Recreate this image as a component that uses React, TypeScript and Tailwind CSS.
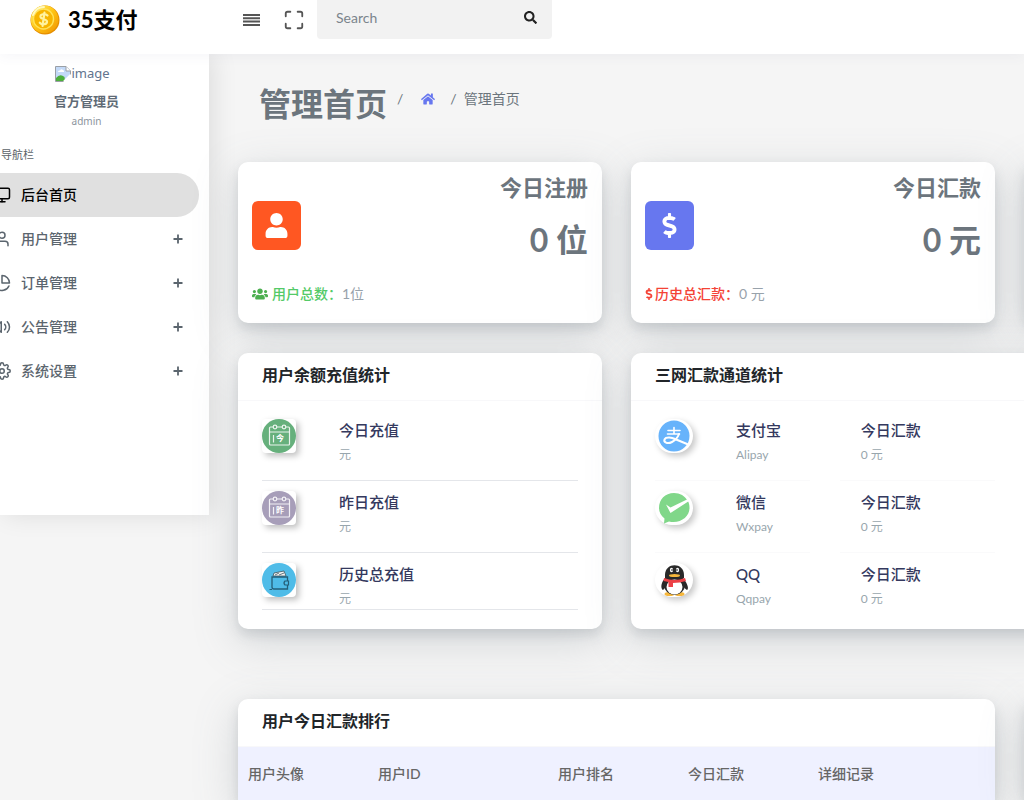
import { useState, type ReactNode } from "react"
import { FiMonitor, FiUser, FiPieChart, FiVolume2, FiSettings, FiMaximize } from "react-icons/fi"
import { FaUser, FaDollarSign, FaUsers, FaHome, FaSearch } from "react-icons/fa"

const menu = [
  { label: "后台首页", icon: FiMonitor, sub: false },
  { label: "用户管理", icon: FiUser, sub: true },
  { label: "订单管理", icon: FiPieChart, sub: true },
  { label: "公告管理", icon: FiVolume2, sub: true },
  { label: "系统设置", icon: FiSettings, sub: true },
]

const cardClass =
  "rounded-[10px] bg-white shadow-[0_12px_44px_rgba(110,125,130,0.25),0_6px_12px_rgba(100,110,120,0.2)]"

function CoinLogo() {
  return (
    <svg viewBox="0 0 30 30" className="size-[30px]" aria-hidden="true">
      <defs>
        <linearGradient id="coin" x1="0" y1="0" x2="1" y2="1">
          <stop offset="0" stopColor="#fff06a" />
          <stop offset="0.5" stopColor="#ffc414" />
          <stop offset="1" stopColor="#ef9300" />
        </linearGradient>
      </defs>
      <circle cx="15" cy="15" r="14.5" fill="#e58e00" />
      <circle cx="14.6" cy="14.4" r="13.8" fill="url(#coin)" />
      <circle cx="13.5" cy="14" r="10" fill="#f7b500" stroke="#ffe25a" strokeWidth="1.4" />
      <path d="M3 10Q6 2 14 2" stroke="#fff9c0" strokeWidth="2" fill="none" strokeLinecap="round" />
      <path d="M17.5 10.5C15.500 8.200 10 9 10.500 12C11 14.500 16.500 13.500 17 16.500C17.200 19.500 12 20.300 9.800 17.700M14.500 7.500L12.500 21" stroke="#fff3a0" strokeWidth="2.200" fill="none" strokeLinecap="round" />
    </svg>
  )
}

function BrokenImage() {
  return (
    <svg viewBox="0 0 16 16" className="size-4" aria-hidden="true">
      <path d="M.5 .5H11L15.500 5V10L10 15.500H.5Z" fill="#c3d9f7" stroke="#9a9fa5" />
      <path d="M11 .5V5H15.500" fill="#fff" stroke="#9a9fa5" />
      <path d="M3 6Q3 4 5 4.500Q6 2.500 8 4Q9.500 4.500 9 6Z" fill="#fff" />
      <path d="M1 15V12Q5 7 9.500 11L10 15Z" fill="#4caf3c" />
      <path d="M9 16L16 9" stroke="#fff" strokeWidth="2.500" />
    </svg>
  )
}

function CalendarIcon({ char, color }: { char: string; color: string }) {
  return (
    <svg viewBox="0 0 34 34" className="size-[34px]">
      <circle cx="17" cy="17" r="17" fill={color} />
      <g fill="none" stroke="#fff" strokeOpacity="0.85" strokeWidth="1.200">
        <rect x="7.500" y="8" width="20" height="18" rx="1" />
        <path d="M7.500 13H27.500M11.500 16V23.500" />
        <circle cx="13" cy="8" r="1.800" fill={color} />
        <circle cx="22" cy="8" r="1.800" fill={color} />
      </g>
      <text x="18" y="22" textAnchor="middle" fontSize="8" fontWeight="700" fill="#fff">{char}</text>
    </svg>
  )
}

function WalletIcon() {
  return (
    <svg viewBox="0 0 34 34" className="size-[34px]" aria-hidden="true">
      <circle cx="17" cy="17" r="17" fill="#4fbce8" />
      <path d="M11 13L12 10L22 8L24 13Z" fill="#f3f3f3" stroke="#3c5660" strokeWidth="0.800" />
      <path d="M13 12L17 10M17 12L22 10" stroke="#3c5660" strokeWidth="0.800" />
      <path d="M10 14H25.500V26H12Q10 26 10 24Z" fill="none" stroke="#255f78" strokeWidth="1.300" />
      <path d="M26.500 18H23Q21 20 23 22H26.500Z" fill="#4fbce8" stroke="#255f78" strokeWidth="1.200" />
      <path d="M7.500 26.500H10" stroke="#255f78" />
    </svg>
  )
}

function AlipayIcon() {
  return (
    <svg viewBox="0 0 38 34" className="h-[34px] w-[38px]" aria-hidden="true">
      <circle cx="19" cy="17" r="15.500" fill="#67b3fb" />
      <g fill="none" stroke="#fff" strokeLinecap="round">
        <path d="M13 11.500H25M19 8.500V14.500M12.500 15H24.500" strokeWidth="1.600" />
        <path d="M24 15Q22 20.500 17 23C12 25.500 8.500 23 9.500 20.500C11 17.500 17 18.500 20 20L32 25" strokeWidth="2" />
      </g>
    </svg>
  )
}

function WxpayIcon() {
  return (
    <svg viewBox="0 0 38 34" className="h-[34px] w-[38px]" aria-hidden="true">
      <path d="M19 2C10 2 4 8.500 4 17C4 21 6 25 9.500 27.500L9 32.500L14 30.500C25 33 34.500 26 34.500 17C34.500 14 34 11.500 32.500 9.500C30 5 25 2 19 2Z" fill="#80d789" />
      <path d="M11 13.500L15.500 16.500L34 7.500V10L15.500 22Z" fill="#fff" />
    </svg>
  )
}

function QqIcon() {
  return (
    <svg viewBox="0 0 38 34" className="h-[34px] w-[38px]" aria-hidden="true">
      <ellipse cx="14.500" cy="31" rx="5" ry="2" fill="#f6b73c" />
      <ellipse cx="24.500" cy="31" rx="5" ry="2" fill="#f6b73c" />
      <path d="M10 15C5 21 6 26 8 27C11 25 13 19 12 15ZM28 15C33 21 34 26 32 27C28 25 26 19 27 15Z" fill="#292929" />
      <ellipse cx="19.500" cy="22" rx="10.500" ry="10" fill="#292929" />
      <ellipse cx="19.500" cy="24" rx="8" ry="7.500" fill="#fff" />
      <path d="M10 15V12C10 -1 29 -1 29 12V15Z" fill="#292929" />
      <ellipse cx="16.500" cy="7" rx="1.600" ry="2.200" fill="#fff" />
      <ellipse cx="22.500" cy="7" rx="1.600" ry="2.200" fill="#fff" />
      <circle cx="17" cy="7" r="0.800" />
      <circle cx="22" cy="7" r="0.800" />
      <ellipse cx="19.500" cy="12.500" rx="5.500" ry="1.500" fill="#f6b73c" />
      <path d="M9 15Q19.500 19 30 15L31 18Q25 20 18 20V24H13.500V19L8.500 18Z" fill="#ec4146" />
    </svg>
  )
}

function Sidebar() {
  const [active, setActive] = useState("后台首页")

  return (
    <aside className="flex h-[461px] w-[209px] shrink-0 justify-end overflow-hidden bg-white">
      <div className="w-[245px] shrink-0">
        <div className="pt-2 pr-2 text-center">
          <div className="flex h-6 items-center justify-center text-[13px] text-slate-500">
            <BrokenImage />
            <span className="font-['Noto_Sans']">image</span>
          </div>
        </div>
        <div className="text-center">
          <p className="mt-[3px] text-[13px] leading-6 font-bold text-[#5f6b76]">官方管理员</p>
          <p className="font-['Noto_Sans'] text-[10px] leading-4 text-[#8b949d]">admin</p>
        </div>

        <p className="mt-4 pl-[37px] text-[11px] leading-5 text-[#5b6268]">导航栏</p>

        {/* Navigation */}
        <nav className="mt-2 pr-[10px]">
          {menu.map(({ label, icon: Icon, sub }) => (
            <a
              key={label}
              href="#"
              onClick={() => setActive(label)}
              className={`flex h-11 items-center rounded-r-full pr-4 pl-[29px] text-sm font-medium ${
                active === label ? "bg-[#e0e0e0] text-black" : "text-[#5b656e]"
              }`}
            >
              <Icon size={18} />
              <span className="ml-[10px] flex-1">{label}</span>
              {sub && (
                <svg viewBox="0 0 10 10" className="size-[10px]" aria-hidden="true">
                  <path d="M5 .5V9.500M.5 5H9.500" stroke="currentColor" strokeWidth="1.800" />
                </svg>
              )}
            </a>
          ))}
        </nav>
      </div>
    </aside>
  )
}

function Header() {
  return (
    <header className="relative flex h-[54px] items-start bg-white shadow-[0_2px_12px_rgba(80,90,140,0.06)]">
      <div className="flex h-10 w-[209px] items-center gap-2 pl-[30px]">
        <CoinLogo />
        <span className="text-[22px] leading-8 font-bold text-black">35支付</span>
      </div>
      <div className="flex h-10 items-center gap-[26px] pl-[34px] text-[#555]">
        <button aria-label="菜单">
          <svg viewBox="0 0 17 12" className="h-3 w-[17px]" aria-hidden="true">
            <path d="M0 1H17M0 4.300H17M0 7.600H17M0 11H17" stroke="currentColor" strokeWidth="2" />
          </svg>
        </button>
        <button aria-label="全屏">
          <FiMaximize className="size-[22px] -m-[3px] stroke-2" />
        </button>
      </div>
      <form className="ml-[15px] flex h-[39px] w-[235px] items-center rounded-b bg-[#f2f2f2] px-[15px]">
        <input
          type="text"
          placeholder="Search"
          aria-label="Search"
          className="w-full min-w-0 bg-transparent px-1 pb-1 text-sm outline-none placeholder:text-[#7b848c]"
        />
        <button type="button" aria-label="搜索" className="pb-1 text-[#222]">
          <FaSearch size={13} />
        </button>
      </form>
    </header>
  )
}

type StatCardProps = {
  title: string
  value: string
  icon: ReactNode
  iconBg: string
  footer: ReactNode
  total: string
}

function StatCard({ title, value, icon, iconBg, footer, total }: StatCardProps) {
  return (
    <section className={`${cardClass} h-[161px] px-[14px] pt-[10px]`}>
      <div className="flex items-start justify-between">
        <div className={`mt-[29px] flex size-[49px] items-center justify-center rounded-md text-white ${iconBg}`}>
          {icon}
        </div>
        <div className="text-right text-[#6c757d]">
          <h3 className="text-[22px] leading-8 font-bold">{title}</h3>
          <p className="mt-4 text-[32px] leading-10 font-bold">{value}</p>
        </div>
      </div>
      <p className="mt-[22px] flex items-center text-sm leading-6">
        {footer}
        <span className="text-[#98a2ab]">{total}</span>
      </p>
    </section>
  )
}

const recharges = [
  { label: "今日充值", icon: <CalendarIcon char="今" color="#66b07c" /> },
  { label: "昨日充值", icon: <CalendarIcon char="昨" color="#a79eb9" /> },
  { label: "历史总充值", icon: <WalletIcon /> },
]

const channels = [
  { name: "支付宝", code: "Alipay", icon: <AlipayIcon /> },
  { name: "微信", code: "Wxpay", icon: <WxpayIcon /> },
  { name: "QQ", code: "Qqpay", icon: <QqIcon /> },
]

function ItemText({ title, sub }: { title: string; sub: string }) {
  return (
    <div>
      <h4 className="text-[15px] leading-[22px] font-medium text-[#34395e]">{title}</h4>
      <p className="mt-1 text-xs leading-5 text-[#98a6ad]">{sub}</p>
    </div>
  )
}

function CardTitle({ children }: { children: ReactNode }) {
  return (
    <div className="h-12 border-b border-[#f8f8fa] px-6 pt-[10px]">
      <h4 className="text-base leading-6 font-bold text-[#212529]">{children}</h4>
    </div>
  )
}

export default function App() {
  return (
    <div className="min-h-screen overflow-hidden bg-[#f5f5f5] font-[Lato,'Noto_Sans_CJK_SC',sans-serif]">
      <div className="relative z-10">
        <Header />
      </div>
      <div className="flex items-start">
        <div className="shadow-[4px_0_24px_rgba(0,0,0,0.1)]">
          <Sidebar />
        </div>

        <main className="min-w-0 flex-1">
          <div className="min-w-[1208px] px-[29px] pt-[30px]">
            {/* Breadcrumb */}
            <div className="flex h-[78px] items-start pl-[21px] text-[#6c757d]">
              <h1 className="text-[32px] leading-10 font-bold">管理首页</h1>
              <ol className="flex items-center pt-[3px] text-sm leading-6">
                <li className="px-[10px]">/</li>
                <li className="px-2">
                  <a href="#" aria-label="首页" className="text-[#6777ef]">
                    <FaHome size={14} />
                  </a>
                </li>
                <li className="px-[7px]">/</li>
                <li>管理首页</li>
              </ol>
            </div>

            <div className="grid grid-cols-3 gap-x-[29px] gap-y-[30px]">
              <StatCard
                title="今日注册"
                value="0 位"
                icon={<FaUser size={25} />}
                iconBg="bg-[#ff5722]"
                total="1位"
                footer={
                  <span className="flex items-center gap-1 font-medium text-[#54ca68]">
                    <FaUsers size={16} className="text-[#4caf50]" />
                    用户总数：
                  </span>
                }
              />
              <StatCard
                title="今日汇款"
                value="0 元"
                icon={<FaDollarSign size={25} />}
                iconBg="bg-[#6777ef]"
                total="0 元"
                footer={
                  <span className="flex items-center font-medium text-[#f44336]">
                    <FaDollarSign size={12} className="-ml-[2px]" />
                    历史总汇款：
                  </span>
                }
              />
              <section className={cardClass} />

              <section className={cardClass}>
                <CardTitle>用户余额充值统计</CardTitle>
                <ul className="px-6 pt-2 pb-[19px]">
                  {recharges.map((item) => (
                    <li
                      key={item.label}
                      className="flex gap-[43px] border-b border-[#e4e6ea] pt-[10px] pb-[15px] last:pb-0"
                    >
                      <div className="size-[34px] rounded bg-white shadow-[3px_3px_6px_rgba(0,0,0,0.25)]">{item.icon}</div>
                      <ItemText title={item.label} sub="元" />
                    </li>
                  ))}
                </ul>
              </section>

              <section className={`${cardClass} col-span-2`}>
                <CardTitle>三网汇款通道统计</CardTitle>
                <ul className="px-6 pt-2">
                  {channels.map((item) => (
                    <li key={item.code} className="group grid grid-cols-4 gap-[30px]">
                      <div className="flex gap-[43px] border-b border-[#fafafb] pt-[10px] pb-[15px] group-last:border-0 group-last:pb-0">
                        <div className="h-[34px] w-[38px] shrink-0 rounded-full bg-white shadow-[3px_3px_6px_rgba(0,0,0,0.22)]">
                          {item.icon}
                        </div>
                        <ItemText title={item.name} sub={item.code} />
                      </div>
                      <div className="border-b border-[#fafafb] pt-[10px] pb-[15px] pl-[21px] group-last:border-0 group-last:pb-0">
                        <ItemText title="今日汇款" sub="0 元" />
                      </div>
                    </li>
                  ))}
                </ul>
              </section>
            </div>

            {/* Ranking */}
            <div className="mt-[70px] grid grid-cols-3 gap-[29px]">
              <section className={`${cardClass} col-span-2 overflow-hidden rounded-b-none`}>
                <CardTitle>用户今日汇款排行</CardTitle>
                <table className="w-full table-fixed text-left text-sm text-[#666]">
                  <thead className="bg-[#eff1ff]">
                    <tr className="h-[53px]">
                      <th className="w-[130px] px-[10px] font-medium">用户头像</th>
                      <th className="w-[180px] px-[10px] font-medium">用户ID</th>
                      <th className="w-[130px] px-[10px] font-medium">用户排名</th>
                      <th className="w-[130px] px-[10px] font-medium">今日汇款</th>
                      <th className="px-[10px] font-medium">详细记录</th>
                    </tr>
                  </thead>
                </table>
              </section>
              <section className={cardClass} />
            </div>
          </div>
        </main>
      </div>
    </div>
  )
}
